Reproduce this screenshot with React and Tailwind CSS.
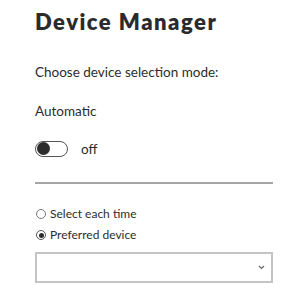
import React from "react";

export default function App() {
  return (
    <div className="w-[294px] h-[298px] bg-white text-[#2d2d2d] overflow-hidden" style={{ fontFamily: "Lato, 'Noto Sans', sans-serif" }}>
      <div className="pl-[35px] pr-[21px] pt-[9px]">
        <h1 className="text-[22px] leading-[26px] font-extrabold tracking-[1.5px] text-[#2b2b2b]">Device Manager</h1>
        <p className="mt-[29px] text-[13.5px] leading-[16px]">Choose device selection mode:</p>
        <p className="mt-[23px] text-[13.5px] leading-[16px]">Automatic</p>
        <div className="mt-[21px] flex items-center h-[17px]">
          <div className="w-[33px] h-[16px] rounded-full border border-[#555] flex items-center pl-[1px]">
            <div className="w-[13px] h-[13px] rounded-full bg-[#2d2d2d]"></div>
          </div>
          <span className="ml-[13px] text-[13.5px] leading-[16px]">off</span>
        </div>
        <div className="mt-[25px] h-[2px] bg-[#a5a5a5]"></div>
        <div className="mt-[22px] flex items-center h-[16px]">
          <div className="w-[10px] h-[10px] rounded-full border border-[#777] ml-[1px]"></div>
          <span className="ml-[4px] text-[12px] leading-[16px]">Select each time</span>
        </div>
        <div className="mt-[5px] flex items-center h-[16px]">
          <div className="w-[10px] h-[10px] rounded-full border border-[#555] ml-[1px] flex items-center justify-center">
            <div className="w-[5px] h-[5px] rounded-full bg-[#2d2d2d]"></div>
          </div>
          <span className="ml-[4px] text-[12px] leading-[16px]">Preferred device</span>
        </div>
        <div className="mt-[9px] h-[31px] border-2 border-[#c4c4c4] flex items-center justify-end pr-[6px]">
          <svg width="7" height="5" viewBox="0 0 7 5" fill="none">
            <path d="M1 1l2.5 2.5L6 1" stroke="#666" strokeWidth="1.2" />
          </svg>
        </div>
      </div>
    </div>
  );
}
